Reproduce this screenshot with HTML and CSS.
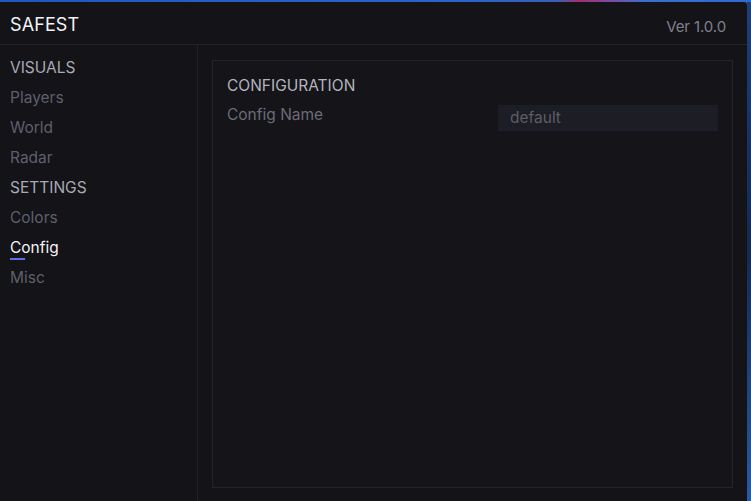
FILE: index.html
```html
<!DOCTYPE html>
<html>
<head>
<meta charset="utf-8">
<link rel="stylesheet" href="styles.css">
</head>
<body>
<div class="desk">
  <div class="window">
    <header class="titlebar">
      <span class="brand">SAFEST</span>
      <span class="ver">Ver 1.0.0</span>
    </header>
    <div class="main">
      <nav class="sidebar">
        <div class="sec">VISUALS</div>
        <div class="item">Players</div>
        <div class="item">World</div>
        <div class="item">Radar</div>
        <div class="sec">SETTINGS</div>
        <div class="item">Colors</div>
        <div class="item active"><span class="label">Config</span></div>
        <div class="item">Misc</div>
      </nav>
      <section class="content">
        <div class="panel">
          <div class="ptitle">CONFIGURATION</div>
          <div class="row">
            <span class="rlabel">Config Name</span>
            <div class="input">default</div>
          </div>
        </div>
      </section>
    </div>
  </div>
</div>
</body>
</html>
```
FILE: styles.css
```css
html, body {
  margin: 0;
  padding: 0;
  width: 751px;
  height: 501px;
  overflow: hidden;
}
body {
  background: linear-gradient(90deg, #1f56c4 0%, #2a63cf 60%, #3a5fb8 74%, #a0306a 77%, #7e4aa0 81%, #3a6fd0 86%, #2f6ad2 100%);
  font-family: Inter, "Noto Sans", sans-serif;
}
.desk {
  padding-top: 2px;
  padding-right: 4px;
  height: 499px;
  background: linear-gradient(180deg, transparent 0, transparent 2px, #1d3f78 2px, #142a52 50%, #2a5aa0 100%) right / 4px 100% no-repeat;
}
.window {
  width: 747px;
  height: 499px;
  background: #131318;
  display: flex;
  flex-direction: column;
  border-top-right-radius: 3px;
}
.titlebar {
  height: 39px;
  padding: 3px 21px 0 10px;
  border-bottom: 1px solid #222329;
  display: flex;
  align-items: center;
  justify-content: space-between;
  box-sizing: content-box;
}
.brand {
  color: #f2f2f5;
  font-size: 18px;
  letter-spacing: 0.1px;
}
.ver {
  color: #80818b;
  font-size: 15px;
  letter-spacing: -0.1px;
  margin-top: 3px;
}
.main {
  flex: 1;
  display: flex;
}
.sidebar {
  width: 198px;
  border-right: 1px solid #202127;
  padding-top: 8px;
  box-sizing: border-box;
}
.sec, .item {
  height: 30px;
  line-height: 30px;
  padding-left: 10px;
  font-size: 15.5px;
}
.sec {
  color: #a9aab4;
}
.item {
  color: #5f606b;
}
.item.active {
  color: #f4f4f7;
}
.item.active .label {
  position: relative;
  display: inline-block;
}
.item.active .label::after {
  content: "";
  position: absolute;
  left: 0;
  top: 25px;
  width: 15px;
  height: 2px;
  background: #5b6fe0;
}
.content {
  flex: 1;
  padding: 15px 14px 13px 14px;
  display: flex;
}
.panel {
  flex: 1;
  border: 1px solid #24252b;
  background: #141419;
  padding: 15px 14px;
}
.ptitle {
  color: #b3b4be;
  font-size: 15.5px;
  line-height: 20px;
  margin-bottom: 9px;
}
.row {
  display: flex;
  justify-content: space-between;
  align-items: flex-start;
}
.rlabel {
  color: #6b6c76;
  font-size: 15.5px;
  line-height: 20px;
}
.input {
  width: 220px;
  height: 26px;
  line-height: 26px;
  background: #1c1d25;
  color: #5c5d68;
  font-size: 15.5px;
  padding-left: 12px;
  box-sizing: border-box;
}
```
